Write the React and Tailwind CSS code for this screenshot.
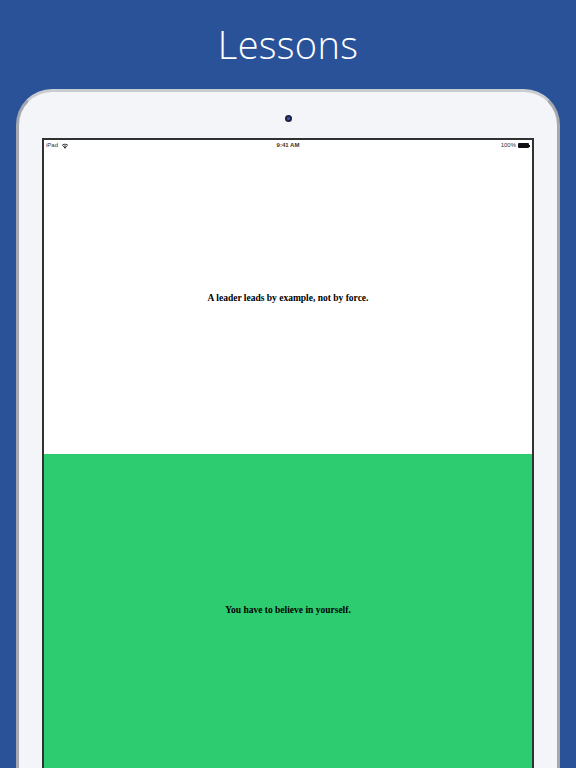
import React from 'react';

function Wifi() {
  return (
    <svg width="8" height="6" viewBox="0 0 16 12" className="ml-[3px]">
      <path d="M8 11.5 L10.4 8.6 A3.8 3.8 0 0 0 5.6 8.6 Z" fill="#111" />
      <path d="M3.9 6.6 A6.3 6.3 0 0 1 12.1 6.6 L11.1 7.8 A4.8 4.8 0 0 0 4.9 7.8 Z" fill="#111" />
      <path d="M1.5 4.3 A9.6 9.6 0 0 1 14.5 4.3 L13.5 5.5 A8 8 0 0 0 2.5 5.5 Z" fill="#111" />
    </svg>
  );
}

export default function App() {
  return (
    <div className="w-[576px] h-[768px] overflow-hidden bg-[#2a5299] flex flex-col" style={{ fontFamily: '"Open Sans", sans-serif' }}>
      <div className="h-[89px] flex items-center justify-center pb-[1px]">
        <h1 className="text-white text-[38px] font-light leading-none tracking-[0.3px]">Lessons</h1>
      </div>
      <div className="mx-[16px] flex-1 rounded-t-[36px] border-[3px] border-b-0 border-[#a5a9af] border-t-[#c9ccd1] bg-[#f4f5f8] flex flex-col">
        <div className="h-[46px] flex items-center justify-center pt-[6px]">
          <div className="w-[7px] h-[7px] rounded-full bg-[#1b2340] flex items-center justify-center">
            <div className="w-[3px] h-[3px] rounded-full bg-[#3a55b0]" />
          </div>
        </div>
        <div className="mx-[23px] flex-1 border-[2px] border-b-0 border-[#2f3133] bg-white flex flex-col">
          <div className="h-[11px] flex items-center justify-between px-[2px] text-[6px] text-[#333]" style={{ fontFamily: '"Liberation Sans", sans-serif' }}>
            <div className="flex items-center w-[60px]">
              <span>iPad</span>
              <Wifi />
            </div>
            <span className="font-semibold">9:41 AM</span>
            <div className="flex items-center justify-end w-[60px]">
              <span>100%</span>
              <div className="ml-[2px] flex items-center">
                <div className="w-[11px] h-[5px] bg-[#111] rounded-[1px]" />
                <div className="w-[1px] h-[2px] bg-[#111]" />
              </div>
            </div>
          </div>
          <div className="h-[303px] flex items-center justify-center pb-[8px]">
            <p className="text-[9.5px] font-bold text-black" style={{ fontFamily: '"Liberation Serif", serif' }}>
              A leader leads by example, not by force.
            </p>
          </div>
          <div className="flex-1 bg-[#2ecc71] flex items-center justify-center pb-[2px]">
            <p className="text-[9.5px] font-bold text-black" style={{ fontFamily: '"Liberation Serif", serif' }}>
              You have to believe in yourself.
            </p>
          </div>
        </div>
      </div>
    </div>
  );
}
